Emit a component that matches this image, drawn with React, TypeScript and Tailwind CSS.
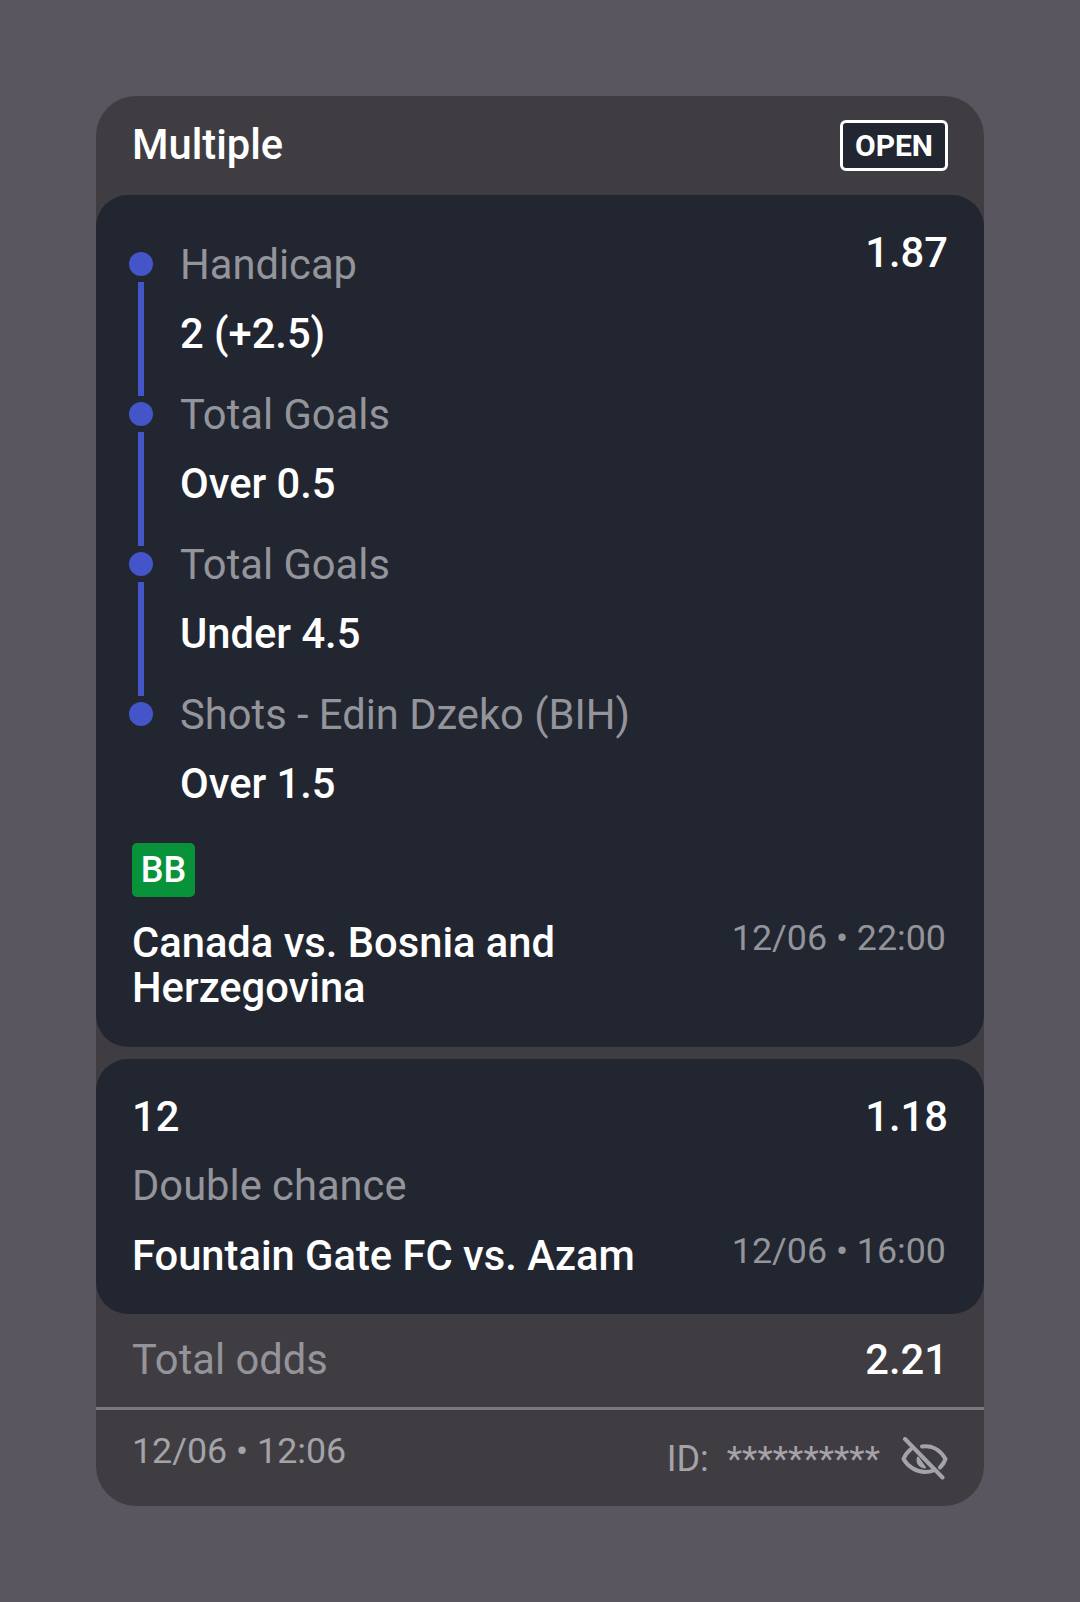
const legs = [
  { market: 'Handicap', pick: '2 (+2.5)' },
  { market: 'Total Goals', pick: 'Over 0.5' },
  { market: 'Total Goals', pick: 'Under 4.5' },
  { market: 'Shots - Edin Dzeko (BIH)', pick: 'Over 1.5' },
]

function EyeOff() {
  return (
    <svg width="48" height="44" viewBox="0 0 48 44" fill="none" stroke="#a3a3a8" strokeWidth="4" strokeLinecap="round" strokeLinejoin="round">
      <path d="M5 2 L42.500 40.500" />
      <path d="M11 12 C8 14.500 5 18 3.500 22 C8 30 17 35 25 35 C28 35 31 34.500 33.500 33.500" />
      <path d="M22 9.500 C31 8 40 12 45.500 22 C44.500 25 42.500 28 40 30.500" />
      <path d="M18 20.500 C16.500 25 19 30 25 30.500 Z" fill="#a3a3a8" strokeWidth="2" />
    </svg>
  )
}

export default function App() {
  return (
    <div className="min-h-[1602px] bg-[#5a5660] pt-[96px] px-[96px] font-['Roboto',sans-serif]">
      <div className="w-[888px] rounded-[40px] bg-[#403d42] overflow-hidden">
        {/* header */}
        <div className="h-[99px] flex items-center justify-between pl-[36px] pr-[36px]">
          <span className="text-[41.7px] font-medium text-white">Multiple</span>
          <span className="h-[51px] w-[108px] flex items-center justify-center rounded-[6px] border-[3px] border-white bg-[#222631] text-[30px] font-bold text-white">
            OPEN
          </span>
        </div>

        {/* multi leg bet */}
        <div className="rounded-[32px] bg-[#222631] h-[852px] pt-[35px] pr-[36px]">
          <div className="flex justify-between">
            <div className="pl-[33px]">
              {legs.map((leg, i) => (
                <div key={i} className="flex h-[150px]">
                  <div className="w-[24px] mr-[27px] flex flex-col items-center pt-[22px]">
                    <div className="w-[24px] h-[24px] shrink-0 rounded-full bg-[#4355c8]" />
                    {i < legs.length - 1 && <div className="w-[6px] flex-1 mt-[6px] -mb-[16px] bg-[#4355c8]" />}
                  </div>
                  <div>
                    <div className="text-[41.7px] leading-[69px] text-[#94949b]">{leg.market}</div>
                    <div className="text-[41.7px] leading-[69px] font-medium text-white">{leg.pick}</div>
                  </div>
                </div>
              ))}
            </div>
            <div className="text-[41.7px] leading-[47px] font-medium text-white -mt-[1px]">1.87</div>
          </div>
          <div className="ml-[36px] mt-[13px] w-[63px] h-[54px] rounded-[5px] bg-[#08933b] flex items-center justify-center text-[36px] font-medium text-white">
            BB
          </div>
          <div className="flex justify-between pl-[36px] mt-[23px]">
            <div className="w-[480px] text-[41.7px] leading-[45px] font-medium text-white">
              Canada vs. Bosnia and Herzegovina
            </div>
            <div className="text-[35.8px] leading-[42px] text-[#94949b] mr-[2px] -mt-[3px]">12/06 • 22:00</div>
          </div>
        </div>

        {/* single bet */}
        <div className="mt-[12px] rounded-[32px] bg-[#222631] h-[255px] pt-[34px] px-[36px]">
          <div className="flex justify-between text-[41.7px] leading-[47px] font-medium text-white">
            <span>12</span>
            <span>1.18</span>
          </div>
          <div className="mt-[22px] text-[41.7px] leading-[47px] text-[#94949b]">Double chance</div>
          <div className="mt-[23px] flex justify-between">
            <span className="text-[41.7px] leading-[47px] font-medium text-white">Fountain Gate FC vs. Azam</span>
            <span className="text-[35.8px] leading-[42px] text-[#94949b] mr-[2px] -mt-[2px]">12/06 • 16:00</span>
          </div>
        </div>

        {/* total */}
        <div className="h-[96px] flex items-center justify-between px-[36px] border-b-[3px] border-[#7a777d]">
          <span className="text-[41.7px] text-[#94949b]">Total odds</span>
          <span className="text-[41.7px] font-medium text-white">2.21</span>
        </div>

        {/* footer */}
        <div className="h-[96px] flex items-start justify-between px-[36px] pt-[20px]">
          <span className="text-[35.8px] leading-[42px] text-[#a3a3a8]">12/06 • 12:06</span>
          <div className="flex items-center text-[#a3a3a8] mt-[4px]">
            <span className="text-[36px] leading-[50px]">ID:</span>
            <span className="ml-[18px] text-[35.6px] leading-[42px]">**********</span>
            <span className="ml-[20px]"><EyeOff /></span>
          </div>
        </div>
      </div>
    </div>
  )
}
